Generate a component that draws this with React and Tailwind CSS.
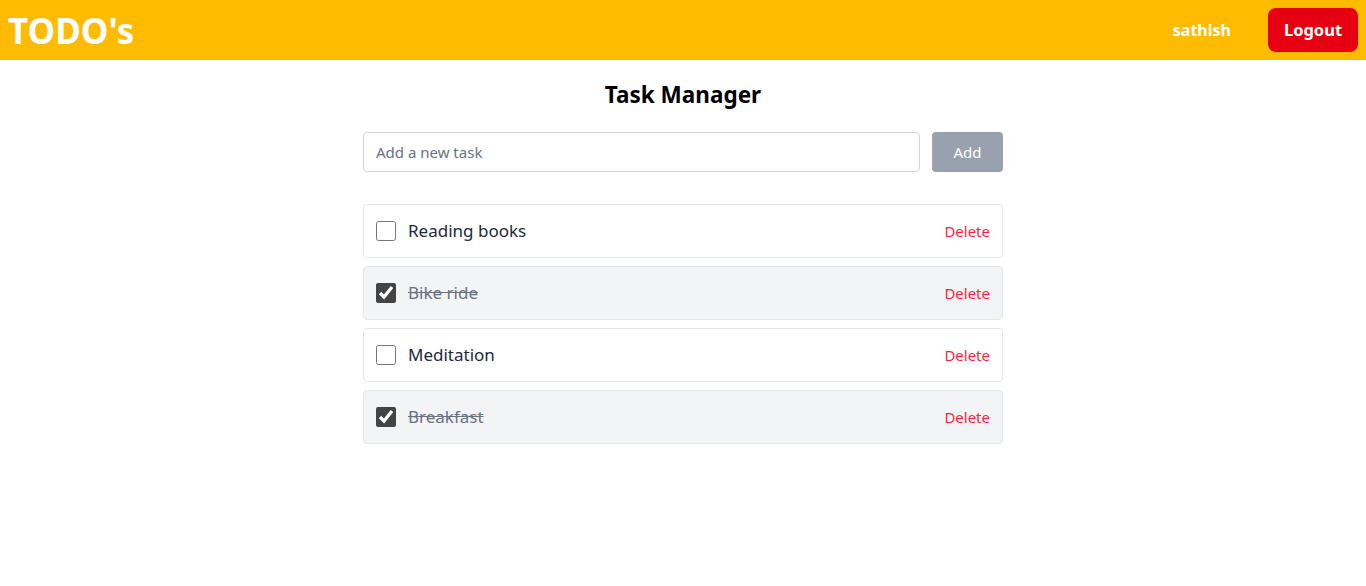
import React, { useState } from 'react';

const initialTasks = [
  { id: 1, text: 'Reading books', done: false },
  { id: 2, text: 'Bike ride', done: true },
  { id: 3, text: 'Meditation', done: false },
  { id: 4, text: 'Breakfast', done: true },
];

export default function App() {
  const [tasks, setTasks] = useState(initialTasks);
  const [draft, setDraft] = useState('');

  const toggle = (id) =>
    setTasks((ts) => ts.map((t) => (t.id === id ? { ...t, done: !t.done } : t)));
  const remove = (id) => setTasks((ts) => ts.filter((t) => t.id !== id));
  const add = () => {
    if (!draft.trim()) return;
    setTasks((ts) => [...ts, { id: Date.now(), text: draft.trim(), done: false }]);
    setDraft('');
  };

  return (
    <div className="min-h-screen bg-white font-['Noto_Sans',sans-serif]">
      <header className="h-[60px] bg-[#ffbb00] flex items-center justify-between pl-2 pr-2">
        <h1 className="text-[35px] font-bold text-white leading-none">TODO's</h1>
        <div className="flex items-center gap-[37px]">
          <span className="text-base font-bold text-white">sathish</span>
          <button className="h-11 w-[90px] rounded-lg bg-[#e60012] text-white text-[16.5px] font-bold">
            Logout
          </button>
        </div>
      </header>

      <main className="w-[640px] mx-auto pt-[19px]">
        <h2 className="text-[22.5px] leading-8 font-bold text-center text-black">Task Manager</h2>

        <div className="flex gap-3 mt-[21px]">
          <input
            value={draft}
            onChange={(e) => setDraft(e.target.value)}
            placeholder="Add a new task"
            className="flex-1 h-10 px-3 border border-gray-300 rounded text-[15px] text-gray-800 placeholder:text-gray-500 outline-none"
          />
          <button
            onClick={add}
            className="w-[71px] h-10 rounded bg-gray-400 text-white text-[15px]"
          >
            Add
          </button>
        </div>

        <ul className="mt-8 flex flex-col gap-2">
          {tasks.map((t) => (
            <li
              key={t.id}
              className={`h-[54px] flex items-center gap-3 px-3 border border-gray-200 rounded ${
                t.done ? 'bg-gray-100' : 'bg-white'
              }`}
            >
              <input
                type="checkbox"
                checked={t.done}
                onChange={() => toggle(t.id)}
                className="w-5 h-5 m-0 accent-[#444444]"
              />
              <span
                className={`flex-1 text-[17px] ${
                  t.done ? 'line-through text-gray-500' : 'text-gray-800'
                }`}
              >
                {t.text}
              </span>
              <button onClick={() => remove(t.id)} className="text-[15px] text-[#ff1f3d]">
                Delete
              </button>
            </li>
          ))}
        </ul>
      </main>
    </div>
  );
}
